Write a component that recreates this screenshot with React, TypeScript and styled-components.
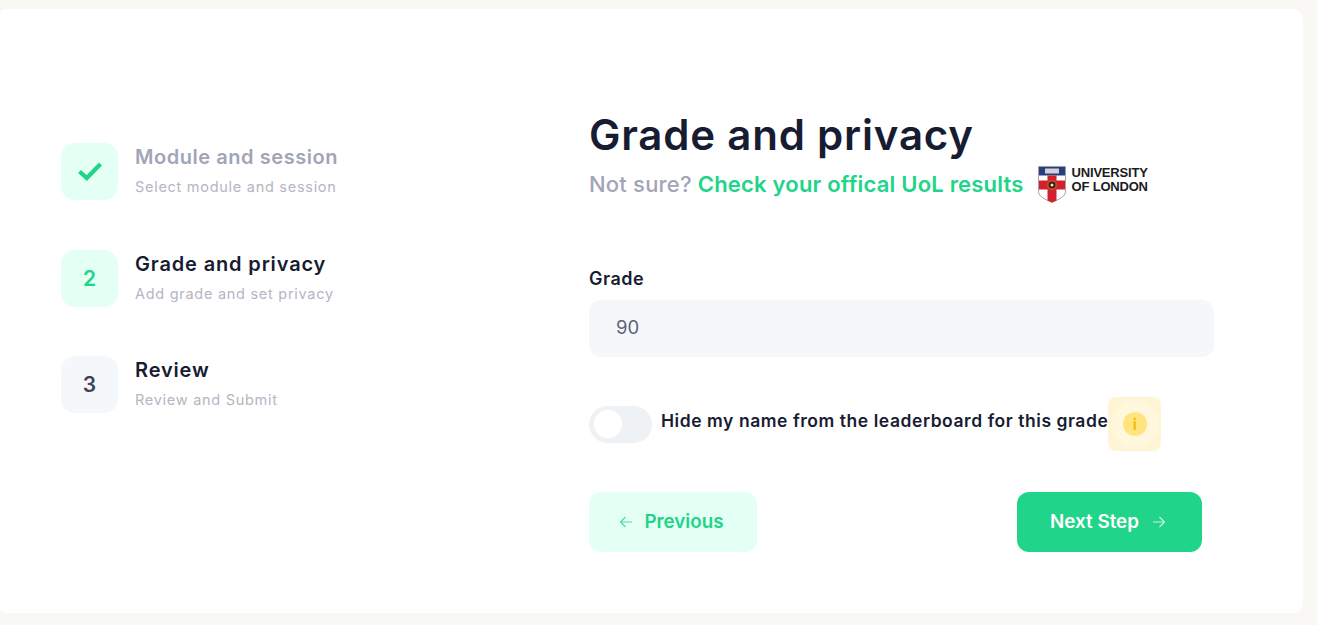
import React from "react";
import styled, { createGlobalStyle } from "styled-components";

const Global = createGlobalStyle`
  html, body { margin: 0; padding: 0; background: #f9f8f5; }
  body { font-family: Inter, "Noto Sans", sans-serif; overflow: hidden; }
  * { box-sizing: border-box; }
`;

const Page = styled.div`
  width: 1317px;
  height: 625px;
  padding: 9px 14px 12px 0;
`;

const Card = styled.main`
  height: 604px;
  background: #fff;
  border-radius: 5px 10px 10px 5px;
  display: grid;
  grid-template-columns: 589px 625px;
`;

const Steps = styled.ol`
  list-style: none;
  margin: 0;
  padding: 134px 0 0 61px;
  display: flex;
  flex-direction: column;
  gap: 49.5px;
`;

const Step = styled.li`
  display: flex;
  gap: 17px;
  height: 57px;
`;

const StepBadge = styled.div<{ $tone: "green" | "grey" }>`
  width: 57px;
  height: 57px;
  border-radius: 14px;
  display: flex;
  align-items: center;
  justify-content: center;
  font-size: 21px;
  font-weight: 600;
  background: ${(p) => (p.$tone === "green" ? "#e4fff4" : "#f5f8fa")};
  color: ${(p) => (p.$tone === "green" ? "#20d489" : "#3f4254")};
`;

const StepText = styled.div`
  display: flex;
  flex-direction: column;
  gap: 6px;
`;

const StepTitle = styled.div<{ $muted?: boolean }>`
  font-size: 20px;
  line-height: 28px;
  font-weight: 600;
  letter-spacing: ${(p) => (p.$muted ? "0.55px" : "0.85px")};
  color: ${(p) => (p.$muted ? "#a1a5b7" : "#181c32")};
`;

const StepSub = styled.div`
  font-size: 14.5px;
  line-height: 20px;
  letter-spacing: 0.72px;
  color: #b5b5c3;
`;

const Form = styled.section`
  padding-top: 99px;
  display: flex;
  flex-direction: column;
`;

const Heading = styled.h1`
  margin: 0;
  font-size: 42px;
  line-height: 54px;
  font-weight: 600;
  letter-spacing: 0.8px;
  color: #181c32;
`;

const SubHeading = styled.div`
  display: flex;
  align-items: center;
  height: 44px;
  font-size: 22px;
  font-weight: 500;
  letter-spacing: 0.2px;
  color: #a1a5b7;
`;

const ResultsLink = styled.a`
  margin-left: 6px;
  color: #20d489;
  font-weight: 600;
  text-decoration: none;
`;

const Logo = styled.div`
  margin-left: 14px;
  display: flex;
  align-items: center;
  gap: 6px;
`;

const LogoText = styled.div`
  font-family: "Liberation Sans", sans-serif;
  font-size: 13px;
  line-height: 14.5px;
  font-weight: 700;
  letter-spacing: -0.2px;
  color: #1b1b22;
  margin-top: -8px;
`;

const FieldLabel = styled.label`
  margin-top: 60px;
  font-size: 18px;
  line-height: 26px;
  font-weight: 600;
  letter-spacing: 0.5px;
  color: #181c32;
`;

const GradeInput = styled.input`
  margin-top: 8px;
  height: 57px;
  width: 625px;
  border: 0;
  outline: 0;
  border-radius: 12px;
  background: #f5f8fa;
  padding: 0 27px 3px;
  font: 400 18.5px Inter, sans-serif;
  color: #5e6278;
`;

const PrivacyRow = styled.div`
  margin-top: 40px;
  display: flex;
  align-items: center;
  height: 54px;
`;

const Toggle = styled.div`
  width: 63px;
  height: 37px;
  border-radius: 19px;
  background: #eff2f5;
  padding: 4.5px;
  flex: none;
`;

const Knob = styled.div`
  width: 28px;
  height: 28px;
  border-radius: 50%;
  background: #fff;
`;

const PrivacyText = styled.span`
  margin: 0 0 8px 9px;
  font-size: 17.5px;
  font-weight: 600;
  letter-spacing: 0.55px;
  color: #181c32;
  white-space: nowrap;
`;

const InfoTile = styled.div`
  width: 53px;
  height: 54px;
  border-radius: 8px;
  background: #fff4d3;
  display: flex;
  align-items: center;
  justify-content: center;
  flex: none;
`;

const InfoHalo = styled.div`
  width: 48px;
  height: 48px;
  border-radius: 50%;
  background: #fff8dd;
  display: flex;
  align-items: center;
  justify-content: center;
`;

const InfoDot = styled.div`
  width: 24px;
  height: 24px;
  border-radius: 50%;
  background: #ffe480;
  color: #f5bf00;
  font-size: 15px;
  font-weight: 700;
  display: flex;
  align-items: center;
  justify-content: center;
`;

const Actions = styled.div`
  margin-top: 41px;
  display: flex;
  justify-content: space-between;
  padding-right: 12px;
`;

const Button = styled.button<{ $primary?: boolean }>`
  height: 60px;
  border: 0;
  border-radius: 12px;
  padding: 0 3px 1px 0;
  display: flex;
  align-items: center;
  justify-content: center;
  gap: ${(p) => (p.$primary ? "13px" : "11px")};
  font: 600 18.8px Inter, sans-serif;
  width: ${(p) => (p.$primary ? "185px" : "168px")};
  background: ${(p) => (p.$primary ? "#20d489" : "#e4fff4")};
  color: ${(p) => (p.$primary ? "#fff" : "#20d489")};
`;

const Arrow = ({ left }: { left?: boolean }) => (
  <svg width="14" height="14" viewBox="0 0 14 14" fill="none" stroke="currentColor" strokeWidth="1.2" opacity={0.75}>
    {left ? <path d="M13 7H1.5M6.5 2 1.5 7l5 5" /> : <path d="M1 7h11.5M7.5 2l5 5-5 5" />}
  </svg>
);

const Shield = () => (
  <svg width="28" height="37" viewBox="0 0 28 37">
    <path d="M.5.5h27v25c0 5-7 8-13.5 11C7.500 33.500.5 30.500.5 25.500z" fill="#fff" stroke="#8a8a92" strokeWidth=".8" />
    <path d="M1 1h26v8.500H1z" fill="#27407c" />
    <path d="M7 2.500h14v5H7z" fill="#cfd0da" />
    <path d="M9.500 9.500h9v25l-4.500 2-4.500-2z" fill="#d2202f" />
    <path d="M1 14.500h26v9H1z" fill="#d2202f" />
    <circle cx="14" cy="19" r="5.500" fill="#c2481f" />
    <circle cx="14" cy="19" r="3.300" fill="#34181a" />
    <circle cx="14" cy="19" r="1.500" fill="#eee8da" />
  </svg>
);

const steps = [
  { badge: <svg width="24" height="19" viewBox="0 0 24 19" fill="none" stroke="#20d489" strokeWidth="4.2"><path d="M1.500 9.500 8.800 16 22.500 2" /></svg>, tone: "green" as const, title: "Module and session", sub: "Select module and session", muted: true },
  { badge: "2", tone: "green" as const, title: "Grade and privacy", sub: "Add grade and set privacy" },
  { badge: "3", tone: "grey" as const, title: "Review", sub: "Review and Submit" },
];

export default function App() {
  return (
    <Page>
      <Global />
      <Card>
        <Steps>
          {steps.map((s) => (
            <Step key={s.title}>
              <StepBadge $tone={s.tone}>{s.badge}</StepBadge>
              <StepText>
                <StepTitle $muted={s.muted}>{s.title}</StepTitle>
                <StepSub>{s.sub}</StepSub>
              </StepText>
            </Step>
          ))}
        </Steps>
        <Form>
          <Heading>Grade and privacy</Heading>
          <SubHeading>
            Not sure?
            <ResultsLink href="#">Check your offical UoL results</ResultsLink>
            <Logo>
              <Shield />
              <LogoText>UNIVERSITY<br />OF LONDON</LogoText>
            </Logo>
          </SubHeading>
          <FieldLabel>Grade</FieldLabel>
          <GradeInput defaultValue="90" />
          <PrivacyRow>
            <Toggle><Knob /></Toggle>
            <PrivacyText>Hide my name from the leaderboard for this grade</PrivacyText>
            <InfoTile><InfoHalo><InfoDot>i</InfoDot></InfoHalo></InfoTile>
          </PrivacyRow>
          <Actions>
            <Button><Arrow left />Previous</Button>
            <Button $primary>Next Step<Arrow /></Button>
          </Actions>
        </Form>
      </Card>
    </Page>
  );
}
